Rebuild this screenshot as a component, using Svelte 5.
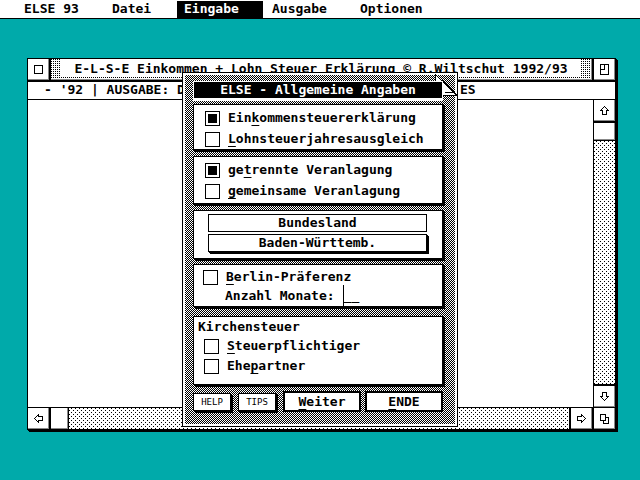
<script lang="ts">
	const menus = ['ELSE 93', 'Datei', 'Eingabe', 'Ausgabe', 'Optionen'];
	let active = $state('Eingabe');

	let form = $state('einkommen');
	let assessment = $state('getrennt');
	let berlin = $state(false);
	let months = $state('__');
	let taxpayer = $state(false);
	let spouse = $state(false);
</script>

{#snippet choice(before: string, key: string, after: string)}
	<span class="text">{before}<u>{key}</u>{after}</span>
{/snippet}

{#snippet arrow(dir: string)}
	<svg class="icon {dir}" viewBox="0 0 9 9" width="9" height="9" aria-hidden="true">
		<path d="M4.5 .5 L8.5 4.5 H6.5 V8.5 H2.5 V4.5 H.5 Z" />
	</svg>
{/snippet}

<div class="screen">
	<nav class="menubar">
		{#each menus as menu}
			<button class="menu" class:active={active === menu} onclick={() => (active = menu)}>{menu}</button>
		{/each}
	</nav>

	<main class="desktop">
		<section class="window">
			<header class="titlebar">
				<button class="gadget" aria-label="Schließen"><span class="square"></span></button>
				<div class="title"><h1>E-L-S-E Einkommen + Lohn Steuer Erklärung © R.Wiltschut 1992/93</h1></div>
				<button class="gadget" aria-label="Maximieren">
					<svg class="icon" viewBox="0 0 9 11" width="9" height="11" aria-hidden="true">
						<path d="M.5 .5 H8.5 V10.5 H.5 Z M4.5 .5 V5.5 H.5" />
					</svg>
				</button>
			</header>

			<div class="info">
				<span class="report">- '92 | AUSGABE: D</span>
				<span>ES</span>
			</div>

			<div class="body">
				<div class="canvas"></div>
				<div class="scroll vertical">
					<button class="gadget" aria-label="Nach oben">{@render arrow('up')}</button>
					<div class="track"><div class="thumb"></div></div>
					<button class="gadget" aria-label="Nach unten">{@render arrow('down')}</button>
				</div>
			</div>

			<footer class="scroll horizontal">
				<button class="gadget" aria-label="Nach links">{@render arrow('left')}</button>
				<div class="track"><div class="thumb"></div></div>
				<button class="gadget" aria-label="Nach rechts">{@render arrow('right')}</button>
				<button class="gadget" aria-label="Größe ändern">
					<svg class="icon" viewBox="0 0 9 10" width="9" height="10" aria-hidden="true">
						<path d="M.5 .5 H5.5 V6.5 H.5 Z M5.5 3.5 H8.5 V9.5 H3.5 V6.5" />
					</svg>
				</button>
			</footer>
		</section>
	</main>

	<div class="dialog" role="dialog" aria-labelledby="dialog-title">
		<svg class="corner" viewBox="0 0 22 22" width="22" height="22" aria-hidden="true">
			<path class="fold" d="M.5 .5 V21.5 H22 Z" />
			<path d="M1.5 1.5 L19.5 18.5 H9.5" />
		</svg>

		<div class="sheet">
			<div class="caption"><h2 id="dialog-title">ELSE - Allgemeine Angaben</h2></div>

			<div class="panel form">
				<label><input type="radio" name="form" value="einkommen" bind:group={form} />{@render choice('Ein', 'k', 'ommensteuererklärung')}</label>
				<label><input type="radio" name="form" value="lohn" bind:group={form} />{@render choice('', 'L', 'ohnsteuerjahresausgleich')}</label>
			</div>

			<div class="panel assessment">
				<label><input type="radio" name="assessment" value="getrennt" bind:group={assessment} />{@render choice('ge', 't', 'rennte Veranlagung')}</label>
				<label><input type="radio" name="assessment" value="gemeinsam" bind:group={assessment} />{@render choice('', 'g', 'emeinsame Veranlagung')}</label>
			</div>

			<div class="panel state">
				<div class="heading">Bundesland</div>
				<button class="popup">Baden-Württemb.</button>
			</div>

			<div class="panel berlin">
				<label><input type="checkbox" bind:checked={berlin} />{@render choice('', 'B', 'erlin-Präferenz')}</label>
				<label class="months"><span class="text">Anzahl Monate:</span><input type="text" maxlength="2" bind:value={months} /></label>
			</div>

			<div class="panel church">
				<div class="text">Kirchensteuer</div>
				<label><input type="checkbox" bind:checked={taxpayer} />{@render choice('', 'S', 'teuerpflichtiger')}</label>
				<label><input type="checkbox" bind:checked={spouse} />{@render choice('Ehe', 'p', 'artner')}</label>
			</div>

			<div class="actions">
				<button class="small">HELP</button>
				<button class="small">TIPS</button>
				<button class="large"><u>W</u>eiter</button>
				<button class="large"><u>E</u>NDE</button>
			</div>
		</div>
	</div>
</div>

<style>
	:global(body) {
		background: #00aaaa;
	}

	.screen {
		position: relative;
		display: flex;
		flex-direction: column;
		min-height: 100vh;
		background: #00aaaa;
		color: #000;
		font: bold 13px/16px 'DejaVu Sans Mono', 'Liberation Mono', monospace;
		white-space: nowrap;
	}

	.screen * {
		box-sizing: border-box;
	}

	button,
	input {
		margin: 0;
		padding: 0;
		border: 0;
		border-radius: 0;
		background: #fff;
		color: inherit;
		font: inherit;
	}

	h1,
	h2 {
		margin: 0;
		font: inherit;
	}

	u {
		text-decoration-thickness: 1px;
		text-underline-offset: 3px;
		text-decoration-skip-ink: none;
	}

	.menubar {
		display: grid;
		grid-template-columns: 88px 72px 88px 88px auto;
		padding: 1px 0 0 17px;
		border-bottom: 1px solid #000;
		background: #fff;
	}

	.menu {
		height: 17px;
		margin-right: 2px;
		padding: 0 0 1px 7px;
		text-align: left;
	}

	.menu.active {
		background: #000;
		color: #fff;
	}

	.desktop {
		flex: 1;
		display: flex;
		padding: 39px 24px 50px 27px;
	}

	.window {
		flex: 1;
		min-width: 0;
		display: flex;
		flex-direction: column;
		border: 1px solid #000;
		background: #fff;
		box-shadow: 1px 1px #000, 2px 2px #000;
	}

	.titlebar {
		display: flex;
		gap: 2px;
		background: #000;
		border-bottom: 2px solid #000;
	}

	.gadget {
		flex: none;
		display: flex;
		align-items: center;
		justify-content: center;
		width: 21px;
		height: 21px;
		box-shadow: inset -1px -1px #888;
	}

	.square {
		width: 9px;
		height: 9px;
		border: 1px solid #000;
	}

	.icon {
		fill: none;
		stroke: #000;
		shape-rendering: crispEdges;
	}

	.down {
		transform: rotate(180deg);
	}

	.left {
		transform: rotate(-90deg);
	}

	.right {
		transform: rotate(90deg);
	}

	.title {
		flex: 1;
		min-width: 0;
		padding: 0 11px 4px 10px;
		background: conic-gradient(#fff 75%, #000 0) 0 0 / 2px 2px;
		box-shadow: inset -1px -1px #888;
	}

	.title h1 {
		height: 17px;
		padding-top: 2px;
		overflow: hidden;
		background: #fff;
		text-align: center;
	}

	.info {
		display: flex;
		height: 18px;
		padding: 0 16px;
		border-bottom: 1px solid #000;
	}

	.report {
		width: 416px;
	}

	.body {
		flex: 1;
		display: flex;
	}

	.canvas {
		flex: 1;
	}

	.scroll {
		display: flex;
		gap: 2px;
		background: #000;
	}

	.vertical {
		flex-direction: column;
		padding-left: 1px;
	}

	.horizontal {
		border-top: 1px solid #000;
	}

	.track {
		flex: 1;
		display: flex;
		flex-direction: inherit;
		background:
			conic-gradient(at 1px 1px, transparent 75%, #000 0) 0 0 / 4px 4px,
			conic-gradient(at 1px 1px, transparent 75%, #000 0) 2px 2px / 4px 4px,
			#fff;
	}

	.thumb {
		flex: none;
		background: #fff;
		box-shadow: inset -1px -1px #888;
	}

	.vertical .thumb {
		height: 18px;
		border-bottom: 1px solid #000;
	}

	.horizontal .thumb {
		width: 18px;
		border-right: 1px solid #000;
	}

	.dialog {
		position: absolute;
		top: 72px;
		left: 50%;
		width: 276px;
		transform: translateX(-50%);
		padding: 2px;
		border: 1px solid #000;
		background: #fff;
	}

	.sheet {
		padding: 6px 12px 12px 8px;
		background: repeating-conic-gradient(#000 0 25%, #fff 0 50%) 0 0 / 2px 2px;
	}

	/* lies over the sheet pattern but under the caption */
	.corner {
		position: absolute;
		top: 1px;
		right: 0;
		fill: none;
		stroke: #000;
		shape-rendering: crispEdges;
	}

	.fold {
		fill: #fff;
	}

	.caption {
		position: relative;
		margin: 0 0 3px;
		padding: 1px 1px 3px;
		background: #fff;
	}

	.caption h2 {
		background: #000;
		color: #fff;
		text-align: center;
	}

	.panel {
		border: 1px solid #000;
		background: #fff;
		box-shadow: 1px 1px #000, 2px 2px #000;
	}

	.panel label {
		display: flex;
		align-items: center;
		gap: 8px;
	}

	.form,
	.assessment {
		display: flex;
		flex-direction: column;
		gap: 5px;
		margin-bottom: 6px;
		padding: 5px 0 2px 11px;
	}

	.assessment {
		padding-bottom: 4px;
	}

	input[type='radio'],
	input[type='checkbox'] {
		appearance: none;
		flex: none;
		width: 15px;
		height: 15px;
		border: 1px solid #000;
	}

	input:checked {
		padding: 2px;
		background: #000 content-box;
	}

	.state {
		display: grid;
		gap: 2px;
		margin-bottom: 5px;
		padding: 3px 15px 6px 14px;
	}

	.heading,
	.popup {
		height: 18px;
		border: 1px solid #000;
		text-align: center;
	}

	.popup {
		box-shadow: 1px 1px #000, 2px 2px #000;
	}

	.berlin {
		margin-bottom: 9px;
		padding: 4px 0 0 9px;
	}

	.panel .months {
		padding-left: 22px;
	}

	.months input {
		width: 24px;
		height: 21px;
		border-left: 1px solid #000;
		outline: none;
	}

	.church {
		padding: 2px 0 8px 4px;
	}

	.church .text {
		margin-bottom: 1px;
	}

	.church label {
		height: 20px;
		padding-left: 6px;
	}

	.church label .text {
		margin: 0;
	}

	.actions {
		display: flex;
		align-items: center;
		gap: 4px;
		margin-top: 6px;
	}

	.small {
		width: 38px;
		height: 18px;
		margin-right: 3px;
		border: 1px solid #000;
		box-shadow: 1px 1px #000, 2px 2px #000;
		font-size: 9px;
		font-weight: normal;
	}

	.large {
		flex: 1;
		height: 21px;
		border: 2px solid #000;
	}
</style>
